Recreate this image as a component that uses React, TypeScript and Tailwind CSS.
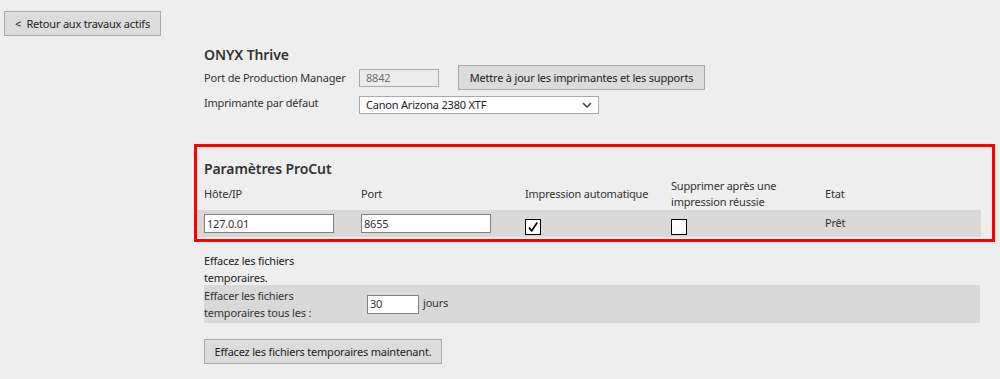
import React from "react";

function Check() {
  return (
    <svg width="12" height="12" viewBox="0 0 12 12" className="block">
      <path d="M2 6.5 L4.6 10 L10.2 1.5" fill="none" stroke="#000" strokeWidth="1.6" strokeLinejoin="round" />
    </svg>
  );
}

export default function App() {
  return (
    <div
      className="w-full h-[379px] bg-[#eeeeee] text-[#333333] text-[11px] tracking-[-0.2px] leading-[16px] overflow-hidden"
      style={{ fontFamily: '"Noto Sans", "Open Sans", sans-serif' }}
    >
      <div className="pt-[11px] pl-[4px]">
        <button className="w-[157px] h-[25px] bg-[#dcdcdc] border border-[#ababab] text-[#222] flex items-center justify-center">
          &lt;&nbsp; Retour aux travaux actifs
        </button>
      </div>

      <div className="ml-[204px] w-[776px]">
        <div className="mt-[10px] text-[14px] tracking-[-0.1px] leading-[18px] font-semibold text-[#333]">ONYX Thrive</div>

        <div className="flex items-center h-[25px] mt-[1px]">
          <div className="w-[155px]">Port de Production Manager</div>
          <div className="w-[80px] h-[18px] border border-[#aaaaaa] bg-[#ececec] text-[#707070] pl-[6px] flex items-center">8842</div>
          <button className="ml-[19px] w-[247px] h-[25px] bg-[#dcdcdc] border border-[#ababab] text-[#222] flex items-center justify-center">
            Mettre à jour les imprimantes et les supports
          </button>
        </div>

        <div className="flex items-start h-[18px] mt-[6px]">
          <div className="w-[155px] leading-[14px]">Imprimante par défaut</div>
          <div className="w-[240px] h-[18px] border border-[#aaaaaa] bg-white flex items-center justify-between pl-[6px] pr-[6px] text-[#222]">
            <span>Canon Arizona 2380 XTF</span>
            <svg width="10" height="7" viewBox="0 0 10 7">
              <path d="M1 1.2 L5 5 L9 1.2" fill="none" stroke="#444" strokeWidth="1.6" />
            </svg>
          </div>
        </div>

        <div className="mt-[30px] -ml-[10px] -mr-[15px] border-[3px] border-[#ff0000] pl-[7px] pr-[11px] pt-[13px] pb-[2px]">
          <div className="text-[14px] tracking-[-0.1px] leading-[18px] font-semibold text-[#333]">Paramètres ProCut</div>
          <div className="grid grid-cols-[157px_164px_146px_154px_1fr] h-[32px] items-center">
            <div>Hôte/IP</div>
            <div>Port</div>
            <div>Impression automatique</div>
            <div>
              Supprimer après une
              <br />
              impression réussie
            </div>
            <div>Etat</div>
          </div>
          <div className="-ml-[7px] pl-[7px] bg-[#d9d9d9] h-[27px] grid grid-cols-[157px_164px_146px_154px_1fr] items-center">
            <div>
              <div className="w-[130px] h-[19px] border border-[#808080] bg-white pl-[2px] flex items-center text-[#333]">127.0.01</div>
            </div>
            <div>
              <div className="w-[130px] h-[19px] border border-[#808080] bg-white pl-[2px] flex items-center text-[#333]">8655</div>
            </div>
            <div className="pt-[6px]">
              <div className="w-[16px] h-[16px] border border-black bg-white flex items-center justify-center">
                <Check />
              </div>
            </div>
            <div className="pt-[6px]">
              <div className="w-[16px] h-[16px] border border-black bg-white" />
            </div>
            <div className="-mt-[2px]">Prêt</div>
          </div>
        </div>

        <div className="mt-[10px] h-[33px] leading-[17px] text-[#222]">
          Effacez les fichiers
          <br />
          temporaires.
        </div>
        <div className="bg-[#d9d9d9] h-[38px] flex items-center">
          <div className="w-[163px] leading-[17px]">
            Effacer les fichiers
            <br />
            temporaires tous les :
          </div>
          <div className="w-[52px] h-[19px] border border-[#808080] bg-white pl-[2px] flex items-center text-[#333]">30</div>
          <div className="ml-[4px] -mt-[3px]">jours</div>
        </div>

        <button className="mt-[16px] w-[238px] h-[25px] bg-[#dcdcdc] border border-[#ababab] text-[#222] flex items-center justify-center">
          Effacez les fichiers temporaires maintenant.
        </button>
      </div>
    </div>
  );
}
